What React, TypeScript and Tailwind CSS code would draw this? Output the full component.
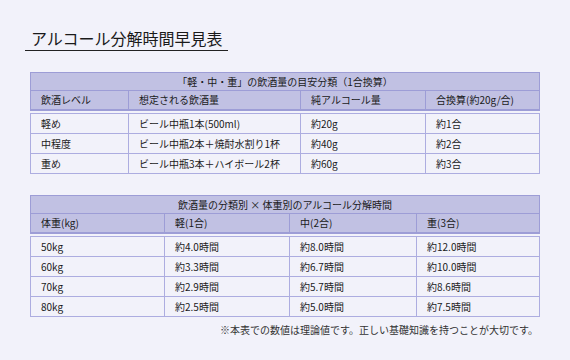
const levels = [
    { level: "軽め", amount: "ビール中瓶1本(500ml)", pure: "約20g", go: "約1合" },
    { level: "中程度", amount: "ビール中瓶2本＋焼酎水割り1杯", pure: "約40g", go: "約2合" },
    { level: "重め", amount: "ビール中瓶3本＋ハイボール2杯", pure: "約60g", go: "約3合" },
];

const weights = [
    { kg: "50kg", light: "約4.0時間", mid: "約8.0時間", heavy: "約12.0時間" },
    { kg: "60kg", light: "約3.3時間", mid: "約6.7時間", heavy: "約10.0時間" },
    { kg: "70kg", light: "約2.9時間", mid: "約5.7時間", heavy: "約8.6時間" },
    { kg: "80kg", light: "約2.5時間", mid: "約5.0時間", heavy: "約7.5時間" },
];

const cols1 = "grid grid-cols-[97px_172px_125px_1fr]";
const cols2 = "grid grid-cols-[133px_125px_127px_1fr]";

function Cell({ children, first = false, head = false }: { children: React.ReactNode; first?: boolean; head?: boolean }) {
    return (
        <div
            className={`flex items-center pl-[10px] ${first ? "" : head ? "border-l border-[#9d9dd6]" : "border-l border-[#adade0]"}`}
        >
            {children}
        </div>
    );
}

function Head({ title, cols, labels }: { title: string; cols: string; labels: string[] }) {
    return (
        <div className="bg-[#c1c1e3] border-t border-x border-b-2 border-[#9d9dd6]">
            <div className="h-[18px] flex items-center justify-center border-b border-[#9d9dd6]">{title}</div>
            <div className={`${cols} h-[18px]`}>
                {labels.map((l, i) => (
                    <Cell key={l} first={i === 0} head>{l}</Cell>
                ))}
            </div>
        </div>
    );
}

export default function App() {
    return (
        <div
            className="w-[570px] h-[360px] bg-[#f2f2fa] text-[#1a1a1a] overflow-hidden"
            style={{ fontFamily: '"Noto Sans CJK JP", "Noto Sans", sans-serif' }}
        >
            <div className="pt-[26px] pl-[25px]">
                <div className="inline-block w-[203px] pl-[6px] h-[23px] border-b border-[#222] text-[16px] leading-[21px] whitespace-nowrap">
                    アルコール分解時間早見表
                </div>
            </div>

            <div className="mx-[30px] mt-[21px] text-[10px] leading-[14px]">
                <Head
                    title="「軽・中・重」の飲酒量の目安分類（1合換算）"
                    cols={cols1}
                    labels={["飲酒レベル", "想定される飲酒量", "純アルコール量", "合換算(約20g/合)"]}
                />
                <div className="mt-[2px] border-t border-x border-[#adade0]">
                    {levels.map(r => (
                        <div key={r.level} className={`${cols1} h-[20px] border-b border-[#adade0]`}>
                            <Cell first>{r.level}</Cell>
                            <Cell>{r.amount}</Cell>
                            <Cell>{r.pure}</Cell>
                            <Cell>{r.go}</Cell>
                        </div>
                    ))}
                </div>

                <div className="mt-[21px]">
                    <Head
                        title="飲酒量の分類別 × 体重別のアルコール分解時間"
                        cols={cols2}
                        labels={["体重(kg)", "軽(1合)", "中(2合)", "重(3合)"]}
                    />
                </div>
                <div className="mt-[2px] border-t border-x border-[#adade0]">
                    {weights.map(r => (
                        <div key={r.kg} className={`${cols2} h-[20px] border-b border-[#adade0]`}>
                            <Cell first>{r.kg}</Cell>
                            <Cell>{r.light}</Cell>
                            <Cell>{r.mid}</Cell>
                            <Cell>{r.heavy}</Cell>
                        </div>
                    ))}
                </div>

                <p className="mt-[6px] pr-[2px] text-right text-[#333]">
                    ※本表での数値は理論値です。正しい基礎知識を持つことが大切です。
                </p>
            </div>
        </div>
    );
}
